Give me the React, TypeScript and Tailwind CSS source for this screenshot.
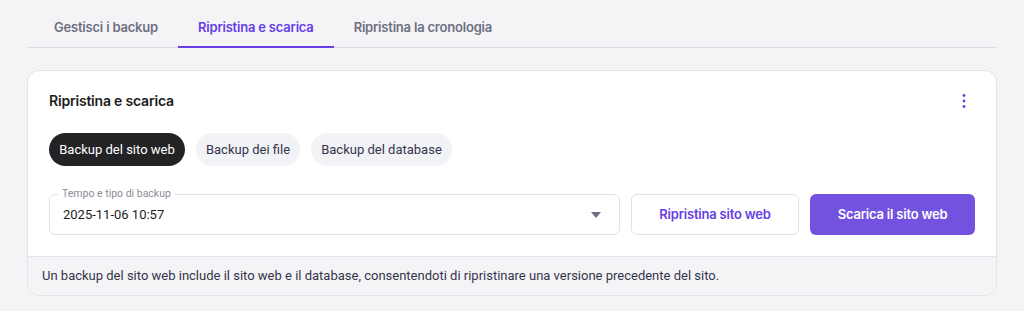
const font = { fontFamily: 'Roboto, "Noto Sans", sans-serif' };
const bold = 'font-["Inter",sans-serif] font-semibold tracking-[-0.2px]';

function KebabIcon() {
  return (
    <svg className="w-4 h-4 text-[#673de6]" viewBox="0 0 16 16" fill="currentColor">
      <circle cx="8" cy="2.5" r="1.4" />
      <circle cx="8" cy="8" r="1.4" />
      <circle cx="8" cy="13.5" r="1.4" />
    </svg>
  );
}

export default function App() {
  const tabs = ['Gestisci i backup', 'Ripristina e scarica', 'Ripristina la cronologia'];
  const active = 1;
  const chips = [
    { label: 'Backup del sito web', w: 'w-[136px]' },
    { label: 'Backup dei file', w: 'w-[104px]' },
    { label: 'Backup del database', w: 'w-[141px]' },
  ];

  return (
    <div className="w-[1024px] h-[311px] bg-[#f4f4f6] px-[27px] antialiased" style={font}>
      <div className="flex border-b border-[#dcdce2] h-[48px] pl-[7px]">
        {tabs.map((t, i) => (
          <div
            key={t}
            className={`px-[20px] pt-[10px] flex items-center text-[13px] ${bold} -mb-px border-b-2 ${
              i === active ? 'text-[#673de6] border-[#673de6]' : 'text-[#6d7081] border-transparent'
            }`}
          >
            {t}
          </div>
        ))}
      </div>

      <div className="mt-[22px] bg-white border border-[#e3e3e8] rounded-[12px] overflow-hidden">
        <div className="pt-[21px] px-[21px] pb-[21px]">
          <div className="flex items-center justify-between h-[18px]">
            <h2 className={`text-[14px] ${bold} text-[#1d1e20] leading-[18px]`}>Ripristina e scarica</h2>
            <button className="mr-[3px]">
              <KebabIcon />
            </button>
          </div>

          <div className="flex gap-[11px] mt-[23px]">
            {chips.map((c, i) => (
              <div
                key={c.label}
                className={`${c.w} h-[33px] rounded-full flex items-center justify-center text-[13px] ${
                  i === 0 ? 'bg-[#232325] text-white' : 'bg-[#f2f3f6] text-[#36344d]'
                }`}
              >
                {c.label}
              </div>
            ))}
          </div>

          <div className="flex gap-[11px] mt-[28px] h-[41px]">
            <div className="relative w-[571px] border border-[#e1e2e6] rounded-[6px] flex items-center justify-between pl-[13px] pr-[18px]">
              <span className="absolute -top-[8px] left-[8px] bg-white px-[4px] text-[10.5px] leading-[14px] text-[#8a8c99]">
                Tempo e tipo di backup
              </span>
              <span className="text-[13px] text-[#1d1e20]">2025-11-06 10:57</span>
              <svg className="w-[10px] h-[6px] text-[#6d7081]" viewBox="0 0 10 6" fill="currentColor">
                <path d="M0 0h10L5 6z" />
              </svg>
            </div>
            <button className={`w-[168px] border border-[#e1e2e6] rounded-[6px] text-[13px] ${bold} text-[#673de6]`}>
              Ripristina sito web
            </button>
            <button className={`w-[165px] bg-[#7352e0] rounded-[6px] text-[13px] ${bold} text-white`}>
              Scarica il sito web
            </button>
          </div>
        </div>

        <div className="border-t border-[#e3e3e8] bg-[#f4f4f6] h-[39px] flex items-center px-[14px] text-[13px] text-[#36344d]">
          Un backup del sito web include il sito web e il database, consentendoti di ripristinare una versione precedente del sito.
        </div>
      </div>
    </div>
  );
}
